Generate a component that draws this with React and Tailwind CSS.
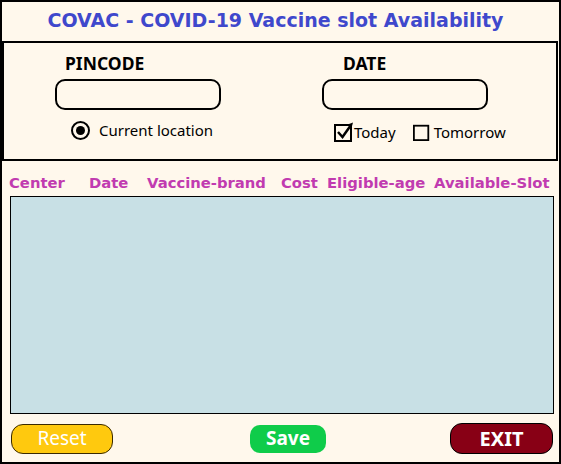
import { useState } from 'react';

const headers = ['Center', 'Date', 'Vaccine-brand', 'Cost', 'Eligible-age', 'Available-Slot'];

const CheckBox = ({ checked, size = 20 }) => (
  <svg width={size} height={size} viewBox="0 0 20 20" className="shrink-0">
    <rect x="1" y="3" width="16" height="16" fill="none" stroke="black" strokeWidth="2" />
    {checked && <path d="M4 10 L8.5 15 L17 3" fill="none" stroke="black" strokeWidth="2.5" />}
    {checked && <path d="M15 2 L19 0.5 L18 4 Z" fill="black" />}
  </svg>
);

const App = () => {
  const [today, setToday] = useState(true);

  return (
    <div className="w-[561px] h-[464px] border-2 border-black bg-[#fff8ec] flex flex-col font-['DejaVu_Sans',sans-serif]">
      <h1 className="h-[39px] flex items-center justify-center text-[19px] font-bold text-[#3f48cc] pb-[2px] pr-[10px]">
        COVAC - COVID-19 Vaccine slot Availability
      </h1>

      {/* search form */}
      <div className="h-[120px] border-2 border-black mr-[1px] flex font-['Noto_Sans',sans-serif]">
        <div className="ml-[51px] mt-[8px] w-[166px] flex flex-col">
          <label className="ml-[10px] text-[17.5px] font-bold leading-[24px]">PINCODE</label>
          <input className="mt-[4px] h-[31px] w-[166px] rounded-[10px] border-2 border-black bg-transparent px-3 outline-none" />
          <div className="ml-[16px] mt-[9px] flex items-center gap-[9px]">
            <span className="w-[19px] h-[19px] rounded-full border-2 border-black flex items-center justify-center">
              <span className="w-[9px] h-[9px] rounded-full bg-black" />
            </span>
            <span className="text-[15px]">Current location</span>
          </div>
        </div>

        <div className="ml-[101px] mt-[8px] w-[166px] flex flex-col">
          <label className="ml-[21px] text-[17.5px] font-bold leading-[24px]">DATE</label>
          <input className="mt-[4px] h-[31px] w-[166px] rounded-[10px] border-2 border-black bg-transparent px-3 outline-none" />
          <div className="ml-[12px] mt-[11px] flex items-center text-[15px]">
            <button onClick={() => setToday(true)} className="flex items-center">
              <CheckBox checked={today} />
              <span>Today</span>
            </button>
            <button onClick={() => setToday(false)} className="ml-[17px] flex items-center gap-[3px]">
              <CheckBox checked={!today} size={18} />
              <span>Tomorrow</span>
            </button>
          </div>
        </div>
      </div>

      {/* results */}
      <div className="flex items-center h-[35px] pt-[9px] pl-[7px] text-[14.8px] font-bold text-[#c13bb0]">
        <span className="w-[80px]">{headers[0]}</span>
        <span className="w-[58px]">{headers[1]}</span>
        <span className="w-[134px]">{headers[2]}</span>
        <span className="w-[46px]">{headers[3]}</span>
        <span className="w-[107px]">{headers[4]}</span>
        <span>{headers[5]}</span>
      </div>
      <div className="ml-[8px] mr-[5px] h-[218px] border border-black bg-[#c8e0e5]" />

      <div className="flex items-center h-[45px] pl-[9px] pt-[4px] font-['Noto_Sans',sans-serif]">
        <button className="w-[102px] h-[30px] rounded-[12px] border border-[#3a2a00] bg-[#ffc90e] text-[19px] text-white leading-none">
          Reset
        </button>
        <button className="ml-[137px] w-[76px] h-[28px] rounded-[10px] bg-[#0fcc4a] text-[19px] font-bold text-white leading-none">
          Save
        </button>
        <button className="ml-[124px] w-[103px] h-[31px] rounded-[12px] border border-black bg-[#880015] text-[20px] font-bold text-white leading-none">
          EXIT
        </button>
      </div>
    </div>
  );
};

export default App;
